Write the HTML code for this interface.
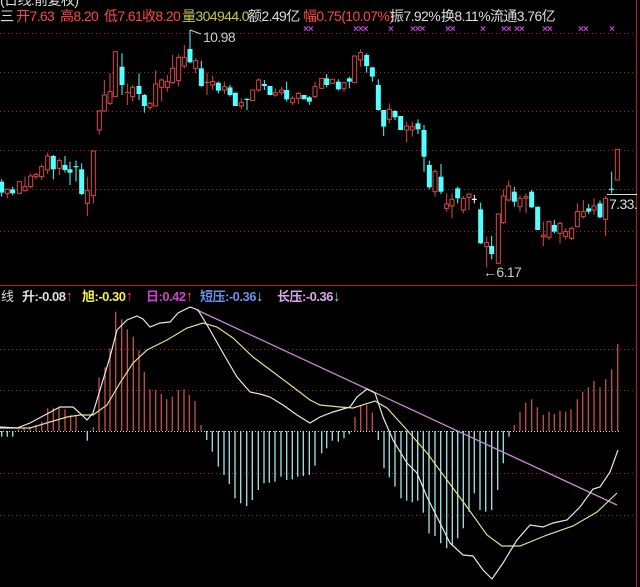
<!DOCTYPE html>
<html><head><meta charset="utf-8">
<style>
html,body{margin:0;padding:0;background:#000;}
#w{position:relative;width:640px;height:587px;overflow:hidden;background:#000;font-family:"Liberation Sans","Noto Sans CJK SC",sans-serif;}
.t{position:absolute;white-space:nowrap;font-size:14px;line-height:15px;letter-spacing:-0.6px;}
.s{position:absolute;white-space:nowrap;font-size:13px;line-height:14px;font-weight:bold;letter-spacing:-0.5px;}
.s b{font-size:15px;}
.m{position:absolute;font-size:10px;font-weight:bold;color:#c040d0;line-height:10px;letter-spacing:-1px;}
svg{position:absolute;left:0;top:0;}
</style></head><body><div id="w">
<svg id="g" width="640" height="587" xmlns="http://www.w3.org/2000/svg"></svg>
<div class="t" style="left:0;top:-7px;color:#ddd">(日线:前复权)</div>
<div class="t" style="left:0;top:9px;color:#ddd">三</div>
<div class="t" style="left:16px;top:9px;color:#ff4848">开7.63</div>
<div class="t" style="left:60px;top:9px;color:#ff4848">高8.20</div>
<div class="t" style="left:104px;top:9px;color:#ff4848">低7.61</div>
<div class="t" style="left:142px;top:9px;color:#ff4848">收8.20</div>
<div class="t" style="left:182px;top:9px;color:#c8c848">量304944.0</div>
<div class="t" style="left:248px;top:9px;color:#ddd">额2.49亿</div>
<div class="t" style="left:303px;top:9px;color:#ff4848">幅0.75(10.07%)</div>
<div class="t" style="left:390px;top:9px;color:#ddd">振7.92%</div>
<div class="t" style="left:441px;top:9px;color:#ddd">换8.11%</div>
<div class="t" style="left:490px;top:9px;color:#ddd">流通3.76亿</div>
<div class="m" style="left:303px;top:25px">××</div>
<div class="m" style="left:353px;top:25px">×××</div>
<div class="m" style="left:388px;top:25px">×</div>
<div class="m" style="left:410px;top:25px">×××</div>
<div class="m" style="left:445px;top:25px">××</div>
<div class="m" style="left:480px;top:25px">×</div>
<div class="m" style="left:501px;top:25px">××</div>
<div class="m" style="left:514px;top:25px">××</div>
<div class="m" style="left:542px;top:25px">××</div>
<div class="m" style="left:578px;top:25px">××</div>
<div class="m" style="left:609px;top:25px">×</div>
<div class="t" style="left:203px;top:30px;color:#ccc">10.98</div>
<div class="t" style="left:483px;top:265px;color:#ccc">←6.17</div>
<div class="t" style="left:609px;top:197px;color:#ddd">7.33.</div>
<div class="s" style="left:1px;top:290px;color:#ddd;font-weight:normal">线</div>
<div class="s" style="left:22px;top:290px;color:#ddd">升:-0.08<b style="color:#ff4040">↑</b></div>
<div class="s" style="left:82px;top:290px;color:#f0f050">旭:-0.30<b style="color:#ff4040">↑</b></div>
<div class="s" style="left:146px;top:290px;color:#d040d0">日:0.42<b style="color:#ff4040">↑</b></div>
<div class="s" style="left:200px;top:290px;color:#6a90e8">短压:-0.36<b style="color:#60e0f0">↓</b></div>
<div class="s" style="left:277px;top:290px;color:#d8a8e8">长压:-0.36<b style="color:#60e0f0">↓</b></div>
</div>
<script>
var g=document.getElementById('g'),h='';
function L(x1,y1,x2,y2,c,w,d){h+='<line x1="'+x1+'" y1="'+y1+'" x2="'+x2+'" y2="'+y2+'" stroke="'+c+'" stroke-width="'+(w||1)+'"'+(d?' stroke-dasharray="'+d+'"':'')+'/>';}
[33,72,111,150,189,231,349,390,473,515].forEach(function(y){L(0,y+.5,636,y+.5,'#a02828',1,'1,3');});
L(0,285.5,637,285.5,'#b02020',1);
L(636.5,0,636.5,587,'#b02020',1);
L(0,431.5,620,431.5,'#ddd',1,'1,2');
var A=[[5,440],[22,440],[38,440],[55,418],[72,415],[90,410],[108,405],[125,395],[143,355],[160,353],[177,350],[195,358],[212,375],[228,378],[262,452],[280,412],[297,262],[315,232],[330,175],[347,65],[365,88],[382,118],[400,140],[417,180],[433,245],[450,298],[467,300],[484,312],[500,328],[517,320],[535,300],[552,298],[568,315],[585,333],[603,405],[620,450],[637,485],[655,530],[672,555],[688,582],[705,625],[722,640],[740,648],[757,630],[775,600],[792,580],[808,578],[825,575],[843,560],[860,570],[877,568],[893,560],[910,558],[928,555],[945,527]];
var B=[[5,490],[20,475],[37,452],[55,455],[72,445],[88,432],[105,380],[122,348],[140,345],[157,368],[175,450],[192,535],[208,562],[225,590],[243,625],[260,632],[277,637],[293,632],[310,668],[327,730],[345,738],[362,760],[380,775],[397,765],[413,745],[430,715],[447,665],[463,610],[480,660],[497,665],[515,660],[533,600],[550,520],[567,440],[583,405],[600,365],[617,338],[635,328],[652,352],[670,375],[687,365],[703,372],[720,362],[737,365],[753,358],[772,328],[788,305],[805,292],[822,273],[840,292],[857,268],[875,238],[893,162]];
function hb(a,ox){a.forEach(function(p){var x=ox+p[0]/3,y=290+p[1]/3;L(x.toFixed(1),431,x.toFixed(1),y.toFixed(1),y<431?'#c85050':'#a8e4e8',1.3);});}
hb(A,0);hb(B,320);
function P(pts,c){h+='<polyline fill="none" stroke="'+c+'" stroke-width="1.2" points="'+pts+'"/>';}
L(197,310,617,505,'#c888d0',1.3);
P('0,428 30,428 50,422 67,417 80,415 93,415 107,405 120,383 133,363 147,350 167,340 187,328 203,323 217,327 233,338 253,357 273,372 293,387 310,400 320,405 340,407 353,408 375,401 387,408 407,430 427,453 447,480 467,507 487,535 502,546 520,546 547,535 573,526 597,512 617,493','#e0e090');
P('0,427 17,428 30,423 43,416 60,407 73,407 82,415 87,420 93,413 100,390 110,357 117,330 127,320 137,316 143,319 150,327 160,323 170,322 178,313 190,307 198,310 210,330 223,353 237,377 250,392 260,394 270,397 283,405 297,415 310,423 320,417 333,412 350,407 357,397 367,389 375,393 383,417 393,440 407,463 417,473 427,497 440,523 450,543 463,555 473,556 483,570 492,579 503,563 517,540 530,525 543,527 553,523 567,520 580,507 593,489 600,487 610,472 618,450','#e8e8e8');
var C1=[[5,455,488,448,500,'c'],[22,478,490,475,505,'r'],[38,478,490,470,495,'c'],[58,455,490,455,490,'r'],[75,470,482,440,485,'r'],[92,438,470,430,475,'r'],[108,433,440,428,448,'r'],[125,410,440,403,450,'r'],[143,378,420,368,432,'r'],[160,378,418,375,448,'c'],[178,392,415,385,435,'r'],[195,405,420,378,428,'c'],[210,418,428,395,465,'c'],[228,410,411,392,455,'c'],[245,418,492,400,495,'c'],[262,482,520,440,558,'r'],[280,363,497,363,520,'r'],[298,243,300,240,313,'r'],[313,195,243,150,245,'r'],[330,185,220,130,225,'r'],[346,65,200,65,200,'r'],[366,110,165,70,195,'c'],[382,188,192,160,225,'r'],[398,172,200,165,215,'r'],[417,168,192,130,210,'c'],[433,195,228,192,248,'c'],[450,220,232,215,240,'r'],[467,162,228,120,228,'r'],[485,150,172,145,215,'r'],[502,155,172,135,185,'r'],[518,115,158,75,162,'r'],[536,82,152,72,170,'r'],[553,82,108,45,115,'r'],[570,57,97,0,100,'c'],[587,92,115,85,130,'r'],[604,115,168,92,170,'c'],[621,157,158,128,195,'r'],[638,155,165,138,180,'r'],[655,158,182,155,190,'c'],[673,170,180,155,192,'r'],[690,172,195,165,200,'c'],[706,188,228,188,228,'c'],[724,218,228,205,238,'r'],[741,208,209,205,240,'c'],[758,180,212,180,212,'r'],[776,150,180,145,185,'r'],[793,162,168,150,180,'c'],[810,168,195,168,195,'c'],[826,188,195,175,200,'r'],[845,180,188,170,195,'r'],[860,180,208,155,215,'c'],[878,205,218,198,225,'r'],[895,190,205,185,222,'r'],[912,195,208,195,208,'c'],[928,202,215,198,225,'c'],[945,170,200,155,205,'r']];
var C2=[[5,145,175,145,175,'r'],[20,145,165,132,172,'c'],[37,148,160,148,160,'r'],[55,155,178,148,182,'c'],[72,158,175,155,185,'r'],[88,145,155,140,175,'c'],[104,78,158,78,158,'r'],[122,68,90,58,110,'r'],[140,75,108,70,128,'c'],[157,112,140,110,155,'c'],[175,165,240,148,242,'c'],[191,240,290,240,318,'c'],[208,238,268,220,280,'r'],[225,243,262,240,270,'c'],[242,258,300,258,300,'c'],[260,288,300,275,338,'r'],[277,290,300,275,320,'r'],[294,280,298,268,312,'c'],[312,300,380,285,425,'c'],[328,405,472,392,478,'c'],[345,425,485,418,500,'r'],[363,440,485,402,492,'c'],[380,522,535,490,545,'r'],[396,508,528,490,565,'r'],[413,475,505,470,520,'c'],[430,505,540,498,550,'r'],[447,492,502,490,540,'r'],[463,508,509,495,520,'w'],[482,538,640,518,642,'c'],[500,638,650,620,712,'r'],[515,648,672,618,688,'c'],[535,552,700,552,700,'r'],[550,498,578,478,582,'r'],[566,468,510,452,515,'r'],[583,485,515,470,530,'c'],[600,505,530,495,545,'r'],[618,500,505,490,550,'r'],[635,485,532,480,535,'c'],[653,530,600,530,600,'c'],[670,615,620,575,648,'r'],[687,575,622,572,630,'r'],[703,585,605,570,610,'c'],[720,580,610,575,640,'r'],[737,605,620,595,628,'r'],[755,595,625,590,630,'r'],[772,545,590,520,592,'r'],[790,545,560,510,565,'r'],[806,535,545,522,552,'c'],[822,528,540,505,555,'r'],[840,520,562,512,565,'c'],[857,505,568,498,618,'r'],[875,478,480,425,490,'c'],[892,358,450,358,450,'r']];
function cd(a,ox){a.forEach(function(k){var x=ox+k[0]/3,bt=30+k[1]/3,bb=30+k[2]/3,wt=30+k[3]/3,wb=30+k[4]/3;
var col=k[5]=='r'?'#d84848':(k[5]=='w'?'#ffffff':'#54ffff');
if(wt<bt)L(x,wt,x,bt,col,1);if(wb>bb)L(x,bb,x,wb,col,1);
if(bb-bt<1.5){L(x-2.5,bt,x+2.5,bt,col,1.2);}
else if(k[5]=='r'){h+='<rect x="'+(x-2)+'" y="'+bt+'" width="4" height="'+(bb-bt)+'" fill="#000" stroke="'+col+'" stroke-width="1"/>';}
else{h+='<rect x="'+(x-2.5)+'" y="'+bt+'" width="5" height="'+(bb-bt)+'" fill="'+col+'"/>';}
});}
cd(C1,0);cd(C2,320);
L(190,30,201,34,'#ccc',1);
L(607,194.5,637,194.5,'#ddd',1);
g.innerHTML=h;
</script>
</body></html>
